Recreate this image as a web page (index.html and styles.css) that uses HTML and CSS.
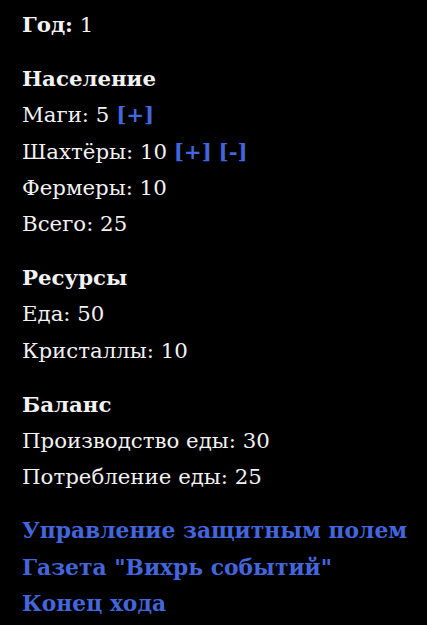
FILE: index.html
```html
<!DOCTYPE html>
<html lang="ru">
<head>
<meta charset="utf-8">
<title>Игра</title>
<link rel="stylesheet" href="styles.css">
</head>
<body>
<div class="panel">
  <section class="block">
    <div class="line"><b>Год:</b> 1</div>
  </section>
  <section class="block">
    <div class="line title">Население</div>
    <div class="line">Маги: 5 <a class="act" href="#">[+]</a></div>
    <div class="line">Шахтёры: 10 <a class="act" href="#">[+]</a> <a class="act" href="#">[-]</a></div>
    <div class="line">Фермеры: 10</div>
    <div class="line">Всего: 25</div>
  </section>
  <section class="block">
    <div class="line title">Ресурсы</div>
    <div class="line">Еда: 50</div>
    <div class="line">Кристаллы: 10</div>
  </section>
  <section class="block">
    <div class="line title">Баланс</div>
    <div class="line">Производство еды: 30</div>
    <div class="line">Потребление еды: 25</div>
  </section>
  <section class="block">
    <div class="line"><a class="nav" href="#">Управление защитным полем</a></div>
    <div class="line"><a class="nav" href="#">Газета "Вихрь событий"</a></div>
    <div class="line"><a class="nav" href="#">Конец хода</a></div>
  </section>
</div>
</body>
</html>
```

FILE: styles.css
```css
html, body {
  margin: 0;
  background: #000;
}
body {
  color: #f2f2f2;
  font-family: "DejaVu Serif", "Liberation Serif", serif;
  font-size: 21.3px;
}
.panel {
  padding: 7px 22px 0;
  display: flex;
  flex-direction: column;
  gap: 18px;
}
.line {
  line-height: 36.2px;
  white-space: nowrap;
}
.title {
  font-weight: bold;
}
.act {
  color: #4466dd;
  font-weight: bold;
  text-decoration: none;
}
.nav {
  color: #4466dd;
  font-weight: bold;
  font-size: 21.8px;
  text-decoration: none;
}
```
